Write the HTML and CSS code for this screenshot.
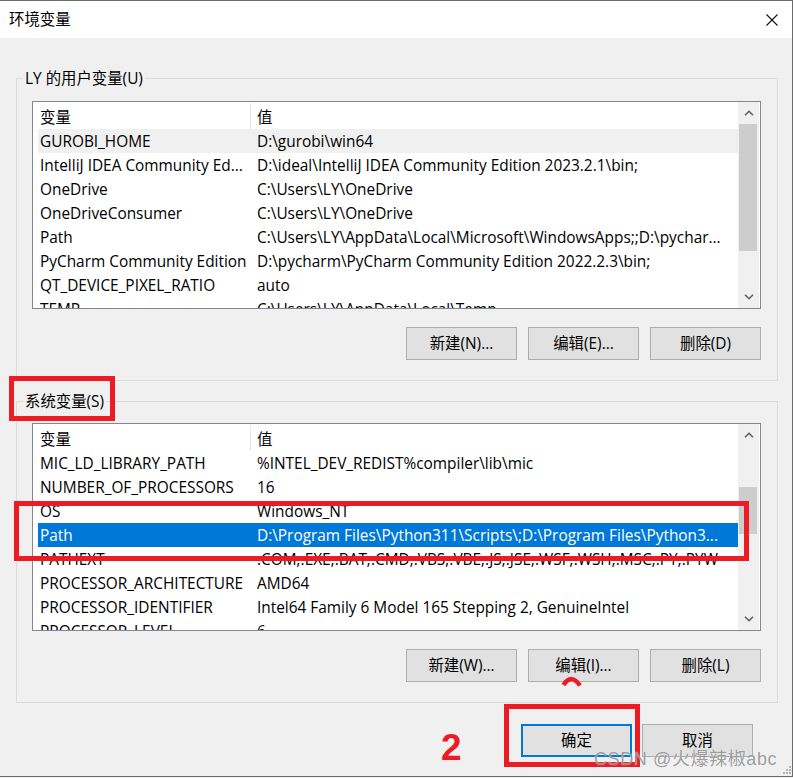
FILE: index.html
```html
<!DOCTYPE html>
<html lang="zh-CN">
<head>
<meta charset="utf-8">
<title>环境变量</title>
<link rel="stylesheet" href="styles.css">
</head>
<body>
<div class="window">
  <div class="titlebar">
    <span class="title">环境变量</span>
    <svg class="close" viewBox="0 0 12 12" width="12" height="12"><path d="M0.5 0.5 L11.5 11.5 M11.5 0.5 L0.5 11.5" stroke="#111" stroke-width="1.1" fill="none"/></svg>
  </div>
  <div class="content">
    <fieldset class="group">
      <legend>LY 的用户变量(U)</legend>
      <div class="list">
        <div class="list-body">
          <div class="list-head"><span class="hcol1">变量</span><span class="hcol2">值</span></div>
          <div class="row hover"><span class="c1">GUROBI_HOME</span><span class="c2">D:\gurobi\win64</span></div>
          <div class="row"><span class="c1">IntelliJ IDEA Community Ed...</span><span class="c2">D:\ideal\IntelliJ IDEA Community Edition 2023.2.1\bin;</span></div>
          <div class="row"><span class="c1">OneDrive</span><span class="c2">C:\Users\LY\OneDrive</span></div>
          <div class="row"><span class="c1">OneDriveConsumer</span><span class="c2">C:\Users\LY\OneDrive</span></div>
          <div class="row"><span class="c1">Path</span><span class="c2">C:\Users\LY\AppData\Local\Microsoft\WindowsApps;;D:\pychar...</span></div>
          <div class="row"><span class="c1">PyCharm Community Edition</span><span class="c2">D:\pycharm\PyCharm Community Edition 2022.2.3\bin;</span></div>
          <div class="row"><span class="c1">QT_DEVICE_PIXEL_RATIO</span><span class="c2">auto</span></div>
          <div class="row"><span class="c1">TEMP</span><span class="c2">C:\Users\LY\AppData\Local\Temp</span></div>
        </div>
        <div class="scrollbar">
          <div class="sb-arrow"><svg viewBox="0 0 10 6" width="10" height="6"><path d="M1 5.3 L5 1.3 L9 5.3" stroke="#606060" stroke-width="1.6" fill="none"/></svg></div>
          <div class="sb-track"><div class="sb-thumb thumb-user"></div></div>
          <div class="sb-arrow"><svg viewBox="0 0 10 6" width="10" height="6"><path d="M1 0.7 L5 4.7 L9 0.7" stroke="#606060" stroke-width="1.6" fill="none"/></svg></div>
        </div>
      </div>
      <div class="btnrow">
        <button class="btn">新建(N)...</button>
        <button class="btn">编辑(E)...</button>
        <button class="btn">删除(D)</button>
      </div>
    </fieldset>

    <fieldset class="group group-sys">
      <legend>系统变量(S)</legend>
      <div class="list">
        <div class="list-body">
          <div class="list-head"><span class="hcol1">变量</span><span class="hcol2">值</span></div>
          <div class="row"><span class="c1">MIC_LD_LIBRARY_PATH</span><span class="c2">%INTEL_DEV_REDIST%compiler\lib\mic</span></div>
          <div class="row"><span class="c1">NUMBER_OF_PROCESSORS</span><span class="c2">16</span></div>
          <div class="row"><span class="c1">OS</span><span class="c2">Windows_NT</span></div>
          <div class="row selected"><span class="c1">Path</span><span class="c2">D:\Program Files\Python311\Scripts\;D:\Program Files\Python3...</span></div>
          <div class="row"><span class="c1">PATHEXT</span><span class="c2 clip">.COM;.EXE;.BAT;.CMD;.VBS;.VBE;.JS;.JSE;.WSF;.WSH;.MSC;.PY;.PYW</span></div>
          <div class="row"><span class="c1">PROCESSOR_ARCHITECTURE</span><span class="c2">AMD64</span></div>
          <div class="row"><span class="c1">PROCESSOR_IDENTIFIER</span><span class="c2">Intel64 Family 6 Model 165 Stepping 2, GenuineIntel</span></div>
          <div class="row"><span class="c1">PROCESSOR_LEVEL</span><span class="c2">6</span></div>
        </div>
        <div class="scrollbar">
          <div class="sb-arrow"><svg viewBox="0 0 10 6" width="10" height="6"><path d="M1 5.3 L5 1.3 L9 5.3" stroke="#606060" stroke-width="1.6" fill="none"/></svg></div>
          <div class="sb-track"><div class="sb-thumb thumb-sys"></div></div>
          <div class="sb-arrow"><svg viewBox="0 0 10 6" width="10" height="6"><path d="M1 0.7 L5 4.7 L9 0.7" stroke="#606060" stroke-width="1.6" fill="none"/></svg></div>
        </div>
      </div>
      <div class="btnrow">
        <button class="btn">新建(W)...</button>
        <button class="btn">编辑(I)...</button>
        <button class="btn">删除(L)</button>
      </div>
    </fieldset>
  </div>
  <div class="footer">
    <button class="btn btn-default">确定</button>
    <button class="btn">取消</button>
  </div>
</div>

<div class="mark mark-label"></div>
<div class="mark mark-path"></div>
<div class="mark mark-ok"></div>
<span class="num-two">2</span>
<svg class="partial-two" viewBox="0 0 22 14" width="22" height="14"><path d="M2.5 10 Q 10.5 -2 19 10.5" stroke="#ed1c24" stroke-width="4.5" fill="none"/></svg>
<span class="watermark">CSDN @火爆辣椒abc</span>
<svg class="grip" viewBox="0 0 10 10" width="10" height="10">
  <rect x="8" y="2" width="2" height="2" fill="#b5b5b5"/>
  <rect x="5" y="5" width="2" height="2" fill="#b5b5b5"/>
  <rect x="8" y="5" width="2" height="2" fill="#b5b5b5"/>
  <rect x="2" y="8" width="2" height="2" fill="#b5b5b5"/>
  <rect x="5" y="8" width="2" height="2" fill="#b5b5b5"/>
  <rect x="8" y="8" width="2" height="2" fill="#b5b5b5"/>
</svg>
</body>
</html>
```

FILE: styles.css
```css
* { box-sizing: border-box; }
html, body { margin: 0; padding: 0; }
body {
  width: 793px;
  height: 778px;
  position: relative;
  overflow: hidden;
  background: #f0f0f0;
  font-family: "Open Sans", "Noto Sans CJK SC", sans-serif;
  font-size: 15.4px;
  color: #000;
}

.window {
  width: 793px;
  height: 777px;
  border-top: 1px solid #6b6b6b;
  border-right: 1px solid #6b6b6b;
  border-bottom: 1px solid #6b6b6b;
  background: #f0f0f0;
  display: flex;
  flex-direction: column;
}

.titlebar {
  flex: none;
  height: 37px;
  background: #fff;
  display: flex;
  align-items: center;
  justify-content: space-between;
  padding: 0 14px 0 9px;
}
.title { line-height: 20px; }
.close { display: block; }

.content { padding: 30px 14px 0 16px; }

.group {
  margin: 0;
  min-width: 0;
  border: 1px solid #dcdcdc;
  padding: 12px 16px 20px 15px;
}
.group legend {
  padding: 0 2px;
  margin-left: -9px;
  line-height: 21px;
}
.group-sys { margin-top: 10px; padding-top: 11px; }

.list {
  height: 208px;
  border: 1px solid #828790;
  background: #fff;
  display: flex;
  padding-right: 1px;
}
.list-body { flex: 1; min-width: 0; overflow: hidden; }
.list-head { height: 27px; display: flex; white-space: nowrap; }
.hcol1 {
  flex: none;
  width: 218px;
  height: 26px;
  margin-top: 1px;
  padding: 3px 0 0 7px;
  line-height: 24px;
  border-right: 1px solid #e5e5e5;
}
.hcol2 { padding: 4px 0 0 6px; line-height: 24px; }

.row {
  height: 24px;
  padding-top: 1px;
  line-height: 24px;
  margin-left: 5px;
  display: flex;
  white-space: nowrap;
}
.row.hover { background: #f0f0f0; }
.row.selected { background: #0078d7; color: #fff; }
.c1 {
  flex: none;
  width: 219px;
  padding-left: 2px;
  overflow: hidden;
  text-overflow: ellipsis;
}
.c2 {
  flex: 1;
  min-width: 0;
  overflow: hidden;
  text-overflow: ellipsis;
  padding-right: 4px;
}
.c2.clip { text-overflow: clip; }

.scrollbar {
  flex: none;
  width: 21px;
  background: #f0f0f0;
  display: flex;
  flex-direction: column;
}
.sb-arrow {
  flex: none;
  height: 22px;
  display: flex;
  align-items: center;
  justify-content: center;
}
.sb-arrow svg { display: block; }
.sb-track { flex: 1; }
.sb-thumb { width: 18px; margin-left: 1px; background: #cdcdcd; }
.thumb-user { height: 127px; }
.thumb-sys { margin-top: 41px; height: 47px; }

.btnrow {
  display: flex;
  justify-content: flex-end;
  gap: 11px;
  margin-top: 18px;
}
.btn {
  width: 111px;
  height: 33px;
  padding: 0;
  background: #e1e1e1;
  border: 1px solid #adadad;
  font-family: inherit;
  font-size: 15.4px;
  color: #000;
  line-height: 20px;
}
.btn-default { border: 2px solid #0078d7; }

.footer {
  display: flex;
  justify-content: flex-end;
  gap: 10px;
  margin-top: 21px;
  padding-right: 39px;
}

/* annotation overlays */
.mark {
  position: absolute;
  border: 5px solid #ed1c24;
}
.mark-label { left: 9px; top: 376px; width: 106px; height: 45px; }
.mark-path { left: 14px; top: 501px; width: 735px; height: 60px; }
.mark-ok { left: 504px; top: 704px; width: 136px; height: 63px; }

.num-two {
  position: absolute;
  left: 441px;
  top: 729px;
  font-family: "Liberation Sans", Arial, sans-serif;
  font-weight: bold;
  font-size: 37px;
  line-height: 37px;
  color: #ed1c24;
}
.partial-two { position: absolute; left: 561px; top: 675px; }

.watermark {
  position: absolute;
  left: 594px;
  top: 750px;
  font-family: "Liberation Sans", "Noto Sans CJK SC", sans-serif;
  font-size: 18px;
  line-height: 18px;
  letter-spacing: 0.6px;
  white-space: nowrap;
  color: rgba(95, 95, 95, 0.62);
  text-shadow: 0 0 1px rgba(255, 255, 255, 0.9);
}
.grip { position: absolute; left: 781px; top: 764px; }
```
